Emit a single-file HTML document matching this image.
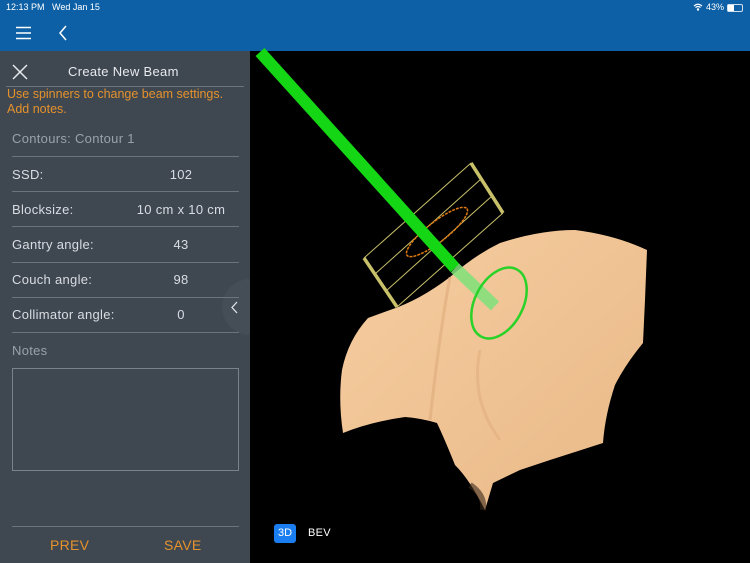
<!DOCTYPE html>
<html><head><meta charset="utf-8"><style>
*{margin:0;padding:0;box-sizing:border-box}
body{width:750px;height:563px;overflow:hidden;background:#000;font-family:"Liberation Sans",sans-serif;position:relative}
.hdr{position:absolute;left:0;top:0;width:750px;height:51px;background:#0d60a5;color:#fff}
.panel{position:absolute;left:0;top:51px;width:250px;height:512px;background:#3f4751;overflow:hidden}
.t{position:absolute;font-size:13px;color:#d9dde2;white-space:nowrap;letter-spacing:.3px}
.line{position:absolute;left:12px;width:227px;height:1px;background:#6b737c}
.val{position:absolute;font-size:13px;color:#d9dde2;transform:translateX(-50%);white-space:nowrap;letter-spacing:.3px}
</style></head><body>
<div class="hdr">
<div class="t" style="left:6px;top:2px;font-size:9px;color:#fff;letter-spacing:0">12:13 PM&nbsp;&nbsp;&nbsp;Wed Jan 15</div>
<div class="t" style="left:706px;top:2px;font-size:9px;color:#fff;letter-spacing:0">43%</div>
<svg style="position:absolute;left:693px;top:3px" width="10" height="8" viewBox="0 0 10 8"><path d="M1 3 Q5 -0.5 9 3 M2.5 4.5 Q5 2.5 7.5 4.5" stroke="#fff" stroke-width="1.2" fill="none"/><circle cx="5" cy="6.5" r="1.2" fill="#fff"/></svg>
<div style="position:absolute;left:727px;top:4px;width:16px;height:8px;border:1px solid #cfe0f0;border-radius:2px"><div style="width:6px;height:6px;background:#fff"></div></div>
<svg style="position:absolute;left:15px;top:26px" width="18" height="14"><path d="M1 1.5H16M1 7H16M1 12.5H16" stroke="#fff" stroke-width="1.4"/></svg>
<svg style="position:absolute;left:58px;top:25px" width="10" height="16"><path d="M8 1L2 8L8 15" stroke="#fff" stroke-width="1.5" fill="none"/></svg>
</div>
<div class="panel">
<svg style="position:absolute;left:12px;top:13px" width="16" height="16"><path d="M1 1L15 15M15 1L1 15" stroke="#e8eaee" stroke-width="1.5"/></svg>
<div class="t" style="left:68px;top:13px;font-size:13px;color:#e8eaee">Create New Beam</div>
<div class="line" style="left:6px;width:238px;top:35px"></div>
<div class="t" style="left:7px;top:36px;color:#e5922c;font-size:12.5px;letter-spacing:0">Use spinners to change beam settings.</div>
<div class="t" style="left:7px;top:51px;color:#e5922c;font-size:12.5px;letter-spacing:0">Add notes.</div>
<div class="t" style="left:12px;top:80px;color:#9aa1a9">Contours: Contour 1</div>
<div class="line" style="top:105px"></div>
<div style="position:absolute;left:222px;top:228px;width:56px;height:56px;border-radius:50%;background:#454d57"></div>
<div class="t" style="left:12px;top:116px">SSD:</div><div class="val" style="left:181px;top:116px">102</div>
<div class="line" style="top:140px"></div>
<div class="t" style="left:12px;top:151px">Blocksize:</div><div class="val" style="left:181px;top:151px">10 cm x 10 cm</div>
<div class="line" style="top:175px"></div>
<div class="t" style="left:12px;top:186px">Gantry angle:</div><div class="val" style="left:181px;top:186px">43</div>
<div class="line" style="top:211px"></div>
<div class="t" style="left:12px;top:221px">Couch angle:</div><div class="val" style="left:181px;top:221px">98</div>
<div class="line" style="top:246px"></div>
<div class="t" style="left:12px;top:256px">Collimator angle:</div><div class="val" style="left:181px;top:256px">0</div>
<div class="line" style="top:281px"></div>
<svg style="position:absolute;left:231px;top:250px" width="8" height="13"><path d="M6 1L1 6.5L6 12" stroke="#dfe3e7" stroke-width="1.3" fill="none"/></svg>
<div class="t" style="left:12px;top:292px;color:#9aa1a9">Notes</div>
<div style="position:absolute;left:12px;top:317px;width:227px;height:103px;border:1px solid #7a828b"></div>
<div class="line" style="top:475px"></div>
<div class="t" style="left:50px;top:486px;color:#e5922c;font-size:14px">PREV</div>
<div class="t" style="left:164px;top:486px;color:#e5922c;font-size:14px">SAVE</div>
</div>
<svg style="position:absolute;left:0;top:0" width="750" height="563">
<defs><linearGradient id="sk" x1="0" y1="0" x2="1" y2="1"><stop offset="0" stop-color="#f6cda0"/><stop offset="1" stop-color="#e9b988"/></linearGradient></defs>
<path d="M390 310 Q420 300 450 277 Q475 255 500 243 Q540 230 575 230 Q615 235 647 250 L645 300 L643 343 Q625 365 615 385 Q605 415 603 443 L575 452 L550 460 L520 470 L493 483 L485 510 Q470 480 455 465 Q445 440 437 423 Q420 418 405 417 Q370 422 343 433 Q338 400 342 370 Q348 340 368 318 Z" fill="url(#sk)"/>
<path d="M450 277 Q440 330 430 420" stroke="#d9a676" stroke-width="3" fill="none" opacity=".5"/>
<path d="M480 350 Q470 400 500 440" stroke="#d9a676" stroke-width="3" fill="none" opacity=".4"/>
<path d="M470 485 Q485 495 483 510" stroke="#3a2a1a" stroke-width="6" fill="none" opacity=".6"/>
<g stroke="#c9c06a" fill="none" stroke-width="1">
<path d="M364 258L471 163M397 307L503 213M375 274L481 179M386 291L492 196"/>
<path d="M364 258L397 307M471 163L503 213" stroke-width="3.5"/>
</g>
<ellipse cx="437" cy="232" rx="38" ry="10" transform="rotate(-38 437 232)" stroke="#e07a10" stroke-width="1.5" fill="none" stroke-dasharray="3 1"/>
<path d="M260 52 L455 268" stroke="#14d614" stroke-width="12"/>
<path d="M455 268 L495 306" stroke="#7fe27a" stroke-width="12" opacity=".85"/>
<ellipse cx="499" cy="303" rx="38" ry="24" transform="rotate(-62 499 303)" stroke="#28d228" stroke-width="2.5" fill="none"/>
</svg>
<div style="position:absolute;left:274px;top:524px;width:22px;height:19px;background:#1a7ef0;border-radius:3px;color:#fff;font-size:11px;text-align:center;line-height:19px">3D</div>
<div class="t" style="left:308px;top:527px;color:#fff;font-size:11px">BEV</div>
</body></html>
